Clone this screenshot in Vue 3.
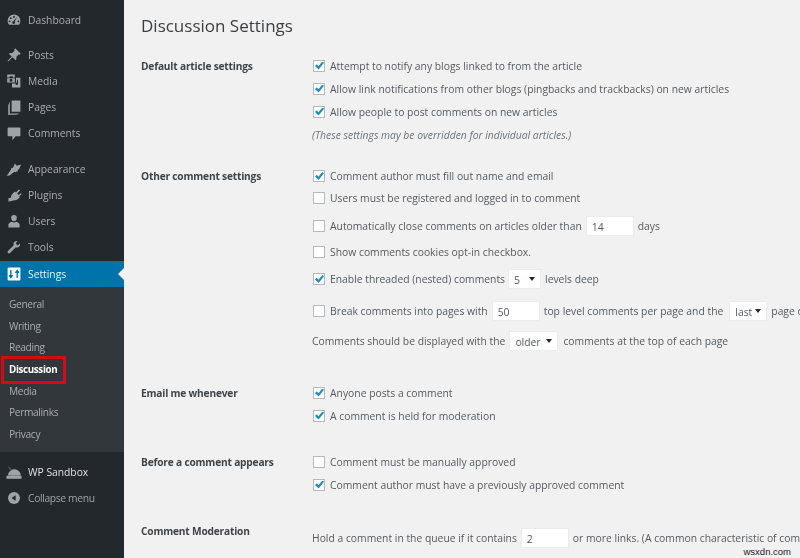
<script setup>
const topItems = [
  { label: 'Dashboard', icon: 'dashboard', gap: '' },
  { label: 'Posts', icon: 'pin', gap: 'gap' },
  { label: 'Media', icon: 'media', gap: '' },
  { label: 'Pages', icon: 'pages', gap: '' },
  { label: 'Comments', icon: 'comment', gap: '' },
  { label: 'Appearance', icon: 'brush', gap: 'gap wide' },
  { label: 'Plugins', icon: 'plug', gap: '' },
  { label: 'Users', icon: 'user', gap: '' },
  { label: 'Tools', icon: 'wrench', gap: '' }
]
const subItems = ['General', 'Writing', 'Reading', 'Discussion', 'Media', 'Permalinks', 'Privacy']

const icons = {
  dashboard: 'M10 3a8 8 0 0 0-8 8c0 2 .8 4 2 5h12c1.300-1 2-3 2-5a8 8 0 0 0-8-8zM6 6.500a1.200 1.200 0 1 1 0 2.400 1.200 1.200 0 0 1 0-2.400zM10 5a1.200 1.200 0 1 1 0 2.400A1.200 1.200 0 0 1 10 5zM4.500 10.500a1.200 1.200 0 1 1 0 2.400 1.200 1.200 0 0 1 0-2.400zM15.500 10.500a1.200 1.200 0 1 1 0 2.400 1.200 1.200 0 0 1 0-2.400zM14 6l-3 6a1.800 1.800 0 1 1-1.500-.7z',
  pin: 'M11.500 1.500l7 7-1.500 1.200-1-.5-3.200 3.200c.6 1.600.3 3.100-.6 4.100L8 12.800 2.800 18 2 17.200 7.200 12 3.500 8.300c1-.9 2.500-1.200 4.100-.6l3.200-3.200-.5-1z',
  media: 'M1.500 2h9.500v3.500H9L8 4H5L4 5.500H1.500zM1.500 6.500H11V12H1.500zM6.200 7.200a1.900 1.900 0 1 0 0 3.800 1.900 1.900 0 0 0 0-3.800zM12.500 6H18v12H7.500v-5h5zM15 8.500v5a1.600 1.600 0 1 1-1.200-1.500V8.500z',
  pages: 'M7 2h11v14H7zM5 4.500v13.500h11v1H4V4.500zM2.500 7h1v12.500h10v.5H2.500z',
  comment: 'M3 3h14a1 1 0 0 1 1 1v9a1 1 0 0 1-1 1h-5l-4 5v-5H3a1 1 0 0 1-1-1V4a1 1 0 0 1 1-1z',
  brush: 'M11 3l2.500 3L19 4.500l-3 6-1.500.5.500 1.500-3.500 1.500-1-.5-6 4.500-4 .5c1-.5 2.500-3 4.500-6l1.500-2-.5-1 3-1.500z',
  plug: 'M3 18v-4l3.500-1c-.5-2 .5-3.500 2-5L11 5.500l1.500 1.500L16 3l1.500 1.500-3.500 3.500 2 2 3-2.500.5 1.500-3 2.500 1 1-2.500 2.500c-2 1.500-3.500 2-5 1.500L7 17.500z',
  user: 'M10 2.500a3.500 3.500 0 0 1 3.500 3.800c0 2-1.300 4-3.500 4s-3.500-2-3.500-4A3.500 3.500 0 0 1 10 2.500zM3 14c1-1.800 3-2.500 4.500-3 1.500 1 3.500 1 5 0 1.500.5 3.500 1.200 4.500 3v4H3z',
  wrench: 'M17.500 5.500l-3 2.500-2.500-2.500 2.500-3C12.500 2 10 3 9.500 5c-.3 1 0 2 .2 2.700L2.500 15c-.8 1-.5 2 0 2.500s1.500.8 2.500 0l7.300-7.200c1 .3 2 .4 3-.1 2-1 2.700-3 2.200-4.700z'
}
</script>

<template>
  <div class="page">
    <aside class="sidebar">
      <nav class="menu">
        <a v-for="item in topItems" :key="item.label" class="item" :class="item.gap">
          <svg class="icon" viewBox="0 0 20 20"><path :d="icons[item.icon]" fill="#9ea3a8" fill-rule="evenodd" /></svg>
          <span>{{ item.label }}</span>
        </a>
        <a class="item current">
          <svg class="icon" viewBox="0 0 20 20">
            <rect x="2" y="2" width="16" height="16" rx="1" fill="#fff" />
            <path d="M6 5v9M3.800 11.500L6 14.500l2.200-3M14 15V6M11.800 8.500L14 5.500l2.200 3" fill="none" stroke="#0073aa" stroke-width="1.700" />
          </svg>
          <span>Settings</span>
        </a>
      </nav>
      <ul class="submenu">
        <li v-for="sub in subItems" :key="sub" :class="{ active: sub === 'Discussion' }">{{ sub }}</li>
      </ul>
      <a class="item sandbox">
        <svg class="icon" viewBox="0 0 20 20">
          <path d="M3 14a7.500 7 0 0 1 15 0zM1 15h18v3H1zM3 4l4 3.500" fill="#9ea3a8" stroke="#9ea3a8" stroke-width=".8" />
        </svg>
        <span>WP Sandbox</span>
      </a>
      <a class="item collapse">
        <svg class="icon" viewBox="0 0 20 20">
          <circle cx="10" cy="10" r="7.500" fill="#9ea3a8" />
          <path d="M12 6.500v7L7 10z" fill="#23282d" />
        </svg>
        <span>Collapse menu</span>
      </a>
    </aside>

    <main class="content">
      <h1>Discussion Settings</h1>

      <section class="row first">
        <h2>Default article settings</h2>
        <div class="fields">
          <label class="line"><span class="box on"></span>Attempt to notify any blogs linked to from the article</label>
          <label class="line"><span class="box on"></span>Allow link notifications from other blogs (pingbacks and trackbacks) on new articles</label>
          <label class="line"><span class="box on"></span>Allow people to post comments on new articles</label>
          <p class="note">(These settings may be overridden for individual articles.)</p>
        </div>
      </section>

      <section class="row other">
        <h2>Other comment settings</h2>
        <div class="fields">
          <label class="line"><span class="box on"></span>Comment author must fill out name and email</label>
          <label class="line"><span class="box"></span>Users must be registered and logged in to comment</label>
          <label class="line tall mt2"><span class="box"></span>Automatically close comments on articles older than <span class="input w50">14</span> days</label>
          <label class="line"><span class="box"></span>Show comments cookies opt-in checkbox.</label>
          <label class="line tall mt1"><span class="box on"></span>Enable threaded (nested) comments <span class="select w33">5</span> levels deep</label>
          <label class="line tall mt2"><span class="box"></span>Break comments into pages with <span class="input w50">50</span> top level comments per page and the <span class="select w39">last</span> page displayed by default</label>
          <label class="line tall"><span>Comments should be displayed with the</span> <span class="select older">older</span> comments at the top of each page</label>
        </div>
      </section>

      <section class="row email">
        <h2>Email me whenever</h2>
        <div class="fields">
          <label class="line"><span class="box on"></span>Anyone posts a comment</label>
          <label class="line"><span class="box on"></span>A comment is held for moderation</label>
        </div>
      </section>

      <section class="row before">
        <h2>Before a comment appears</h2>
        <div class="fields">
          <label class="line"><span class="box"></span>Comment must be manually approved</label>
          <label class="line"><span class="box on"></span>Comment author must have a previously approved comment</label>
        </div>
      </section>

      <section class="row moderation">
        <h2>Comment Moderation</h2>
        <div class="fields">
          <label class="line tall">Hold a comment in the queue if it contains <span class="input w50">2</span> or more links. (A common characteristic of comment spam is a large number of hyperlinks.)</label>
        </div>
      </section>
    </main>

    <span class="watermark">wsxdn.com</span>
  </div>
</template>

<style>
html, body {
  margin: 0;
  overflow: hidden;
}
</style>

<style scoped>
.page {
  position: relative;
  display: flex;
  width: 800px;
  height: 558px;
  overflow: hidden;
  background: #f1f1f1;
  font-family: "Open Sans", "Noto Sans", sans-serif;
  font-size: 10.350px;
  color: #555a5f;
}

/* sidebar */
.sidebar {
  flex: none;
  width: 124px;
  background: #23282d;
  padding-top: 7px;
  box-sizing: border-box;
  filter: blur(.3px);
}
.item {
  display: flex;
  align-items: center;
  height: 26px;
  color: #a9adb1;
  font-size: 10.300px;
}
.item.gap {
  margin-top: 9px;
}
.item.wide {
  margin-top: 10px;
}
.icon {
  width: 16px;
  height: 16px;
  margin-left: 6px;
  margin-right: 6px;
  flex: none;
}
.current {
  position: relative;
  margin-top: 1px;
  background: #0073aa;
  color: #e8f2f7;
}
.current::after {
  content: "";
  position: absolute;
  right: 0;
  top: 7px;
  border: 6px solid transparent;
  border-right-color: #f1f1f1;
  border-left-width: 0;
}
.submenu {
  list-style: none;
  margin: 0;
  padding: 7px 0 6px;
  background: #32373c;
  color: #a9adb1;
  font-size: 10.200px;
  letter-spacing: -.35px;
}
.submenu li {
  position: relative;
  height: 21.700px;
  line-height: 21.700px;
  padding-left: 9px;
}
.submenu .active {
  color: #fff;
  font-weight: 700;
  font-size: 9.800px;
}
.submenu .active::before {
  content: "";
  position: absolute;
  left: 1px;
  top: -3px;
  width: 65px;
  height: 28px;
  border: 3px solid #d40a16;
  box-sizing: border-box;
}
.sandbox {
  margin-top: 7px;
  color: #dfe0e1;
}
.collapse {
  color: #9ea3a8;
  letter-spacing: -.35px;
}

/* main */
.content {
  flex: 1;
  min-width: 0;
  padding: 0 0 0 17px;
  filter: blur(.3px);
}
h1 {
  margin: 0;
  padding-top: 13px;
  height: 27px;
  line-height: 26px;
  font-size: 17px;
  font-weight: 400;
  color: #3a3f44;
}
.row {
  display: flex;
}
.first {
  margin-top: 14px;
}
.other {
  margin-top: 18px;
}
.other .line {
  height: 22px;
}
.other .line.tall {
  height: 30px;
}
.mt1 {
  margin-top: 1px;
}
.mt2 {
  margin-top: 2px;
}
.email {
  margin-top: 25px;
}
.before {
  margin-top: 23px;
}
.moderation {
  margin-top: 24px;
}
.moderation .fields {
  margin-top: 3px;
}
h2 {
  flex: none;
  box-sizing: border-box;
  width: 171px;
  margin: 0;
  font-size: 10.200px;
  letter-spacing: -.2px;
  line-height: 22px;
  font-weight: 700;
  color: #3f444a;
}
.first h2,
.email h2,
.before h2 {
  padding-top: 1px;
}
.fields {
  min-width: 0;
}
.line {
  display: flex;
  align-items: center;
  height: 23px;
  white-space: nowrap;
}
.line.tall {
  height: 30px;
}
.box {
  flex: none;
  position: relative;
  width: 12px;
  height: 12px;
  margin: 0 5px 0 1px;
  background: #fff;
  border: 1px solid #b4b9be;
  box-sizing: border-box;
}
.box.on::after {
  content: "";
  position: absolute;
  left: 1px;
  top: 1px;
  width: 9px;
  height: 8px;
  background: #1e8cbe;
  clip-path: polygon(0 55%, 20% 35%, 38% 60%, 82% 0, 100% 15%, 40% 100%);
}
.note {
  margin: 0;
  height: 24px;
  line-height: 24px;
  font-style: italic;
  color: #6e7378;
}
.input,
.select {
  flex: none;
  display: inline-block;
  height: 20px;
  line-height: 20px;
  margin: 0 4px;
  padding-left: 5px;
  background: #fff;
  box-sizing: border-box;
  border: 1px solid #ececec;
  position: relative;
}
.select::after {
  content: "";
  position: absolute;
  right: 5px;
  top: 7px;
  border: 3px solid transparent;
  border-top: 4px solid #23282d;
  border-bottom-width: 0;
}
.w50 {
  width: 48px;
}
.w33 {
  width: 33px;
  margin-left: 3px;
}
.w39 {
  width: 38px;
  margin-left: 6px;
}
.older {
  width: 49px;
  margin-right: 5px;
}
.watermark {
  position: absolute;
  right: 7px;
  bottom: 1px;
  padding: 0 2px;
  font-family: "Liberation Sans", sans-serif;
  font-size: 9.500px;
  color: #222;
  background: #f1f1f1;
}
</style>
